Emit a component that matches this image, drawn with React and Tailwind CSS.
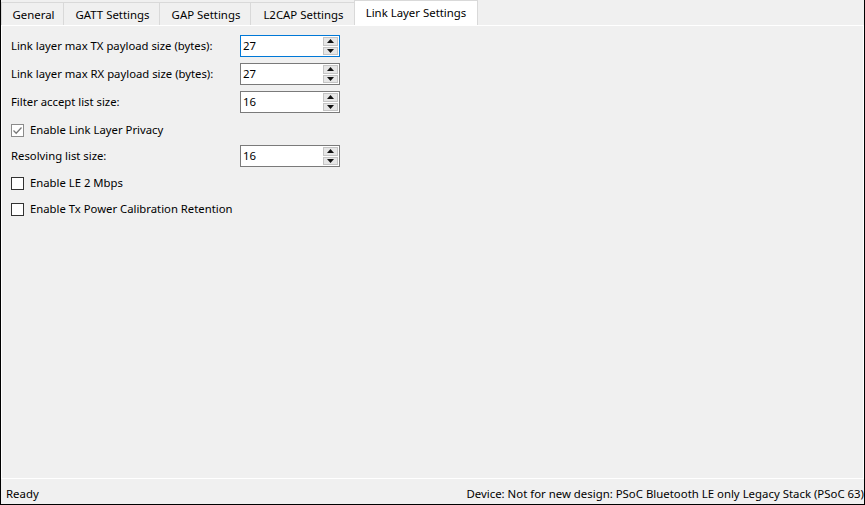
import { useState } from 'react'

const TABS = [
  { key: 'general', label: 'General', w: 'w-[63px]' },
  { key: 'gatt', label: 'GATT Settings', w: 'w-[97px]' },
  { key: 'gap', label: 'GAP Settings', w: 'w-[92px]' },
  { key: 'l2cap', label: 'L2CAP Settings', w: 'w-[105px]' },
  { key: 'll', label: 'Link Layer Settings', w: 'w-[124px]' },
]

const FONT = "font-['Noto_Sans',sans-serif]"

// Piccolo spin box alla Windows: campo di testo più le due frecce a destra.
function SpinBox({ value, focused }) {
  return (
    <div
      className={`flex h-[22px] w-[100px] items-stretch bg-white border ${
        focused ? 'border-[#0078d7]' : 'border-[#7a7a7a]'
      }`}
    >
      <input
        readOnly
        value={value}
        className="min-w-0 flex-1 bg-transparent pl-[2px] text-[11.4px] text-black outline-none"
      />
      <div className="my-[1px] mr-[1px] flex w-[15px] flex-col gap-[1px]">
        <div className="flex flex-1 items-center justify-center border border-[#c4c4c4] bg-[#e6e6e6]">
          <svg width="7" height="4" viewBox="0 0 7 4">
            <path d="M3.5 0 L7 4 L0 4 Z" fill="#111" />
          </svg>
        </div>
        <div className="flex flex-1 items-center justify-center border border-[#c4c4c4] bg-[#e6e6e6]">
          <svg width="7" height="4" viewBox="0 0 7 4">
            <path d="M0 0 L7 0 L3.5 4 Z" fill="#111" />
          </svg>
        </div>
      </div>
    </div>
  )
}

function FieldRow({ label, value, focused, className = '' }) {
  return (
    <div className={`flex h-[22px] items-center ${className}`}>
      <span className="w-[229px] shrink-0 text-[11.3px] text-black">{label}</span>
      <SpinBox value={value} focused={focused} />
    </div>
  )
}

// Il primo checkbox è spuntato ma in grigio, come un controllo disattivato.
function CheckRow({ label, checked, className = '' }) {
  return (
    <div className={`flex h-[22px] items-center ${className}`}>
      <span
        className={`flex h-[13px] w-[13px] shrink-0 items-center justify-center bg-white border ${
          checked ? 'border-[#8c8c8c]' : 'border-[#333333]'
        }`}
      >
        {checked && (
          <svg width="11" height="11" viewBox="0 0 11 11">
            <path d="M1.5 5.5 L4.2 8.2 L9.5 2.5" fill="none" stroke="#7a7a7a" strokeWidth="1.3" />
          </svg>
        )}
      </span>
      <span className="ml-[6px] text-[11.3px] text-black">{label}</span>
    </div>
  )
}

export default function App() {
  const [active, setActive] = useState('ll')

  return (
    <div
      className={`flex h-[505px] w-[865px] flex-col overflow-hidden border-x border-b border-black bg-[#f0f0f0] ${FONT}`}
    >
      {/* barra delle schede */}
      <div className="flex h-[25px] shrink-0 items-end">
        {TABS.map(t =>
          t.key === active ? (
            <button
              key={t.key}
              type="button"
              className={`${t.w} -ml-px flex h-[25px] items-center justify-center border-x border-t border-[#d9d9d9] bg-white text-[11.4px] text-black`}
            >
              {t.label}
            </button>
          ) : (
            <button
              key={t.key}
              type="button"
              onClick={() => setActive(t.key)}
              className={`${t.w} -ml-px flex h-[23px] items-center justify-center border-x border-t border-[#d9d9d9] bg-[#f0f0f0] pl-[2px] pt-[1px] text-[11.4px] text-black first:ml-0`}
            >
              {t.label}
            </button>
          )
        )}
      </div>

      {/* pagina della scheda */}
      <div className="flex flex-1 flex-col border border-white pl-[9px] pt-[9px]">
        <FieldRow label="Link layer max TX payload size (bytes):" value="27" focused />
        <FieldRow label="Link layer max RX payload size (bytes):" value="27" className="mt-[6px]" />
        <FieldRow label="Filter accept list size:" value="16" className="mt-[6px]" />
        <CheckRow label="Enable Link Layer Privacy" checked className="mt-[6px]" />
        <FieldRow label="Resolving list size:" value="16" className="mt-[4px]" />
        <CheckRow label="Enable LE 2 Mbps" className="mt-[5px]" />
        <CheckRow label="Enable Tx Power Calibration Retention" className="mt-[4px]" />
      </div>

      {/* barra di stato */}
      <div className="flex h-[25px] shrink-0 items-center justify-between whitespace-nowrap pl-[5px] pt-[4px] text-[11.4px] text-black">
        <span>Ready</span>
        <span>Device: Not for new design: PSoC Bluetooth LE only Legacy Stack (PSoC 63)</span>
      </div>
    </div>
  )
}
